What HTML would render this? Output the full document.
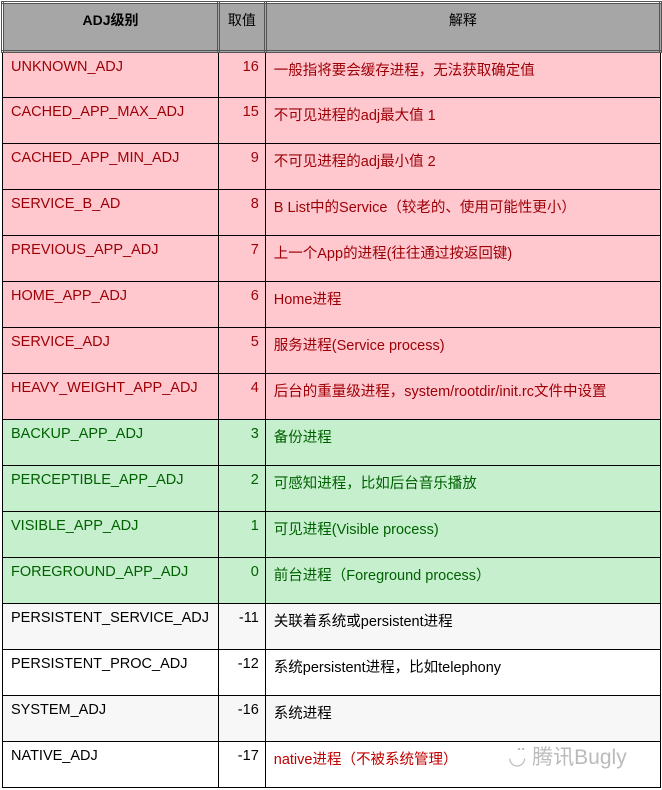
<!DOCTYPE html>
<html><head><meta charset="utf-8"><style>
body{margin:0;background:#fff;width:662px;height:790px;overflow:hidden;font-family:"Liberation Sans","Noto Sans CJK SC",sans-serif;font-size:14.5px}
table{position:absolute;left:1px;top:1px;border-collapse:collapse;table-layout:fixed}
td{border:1px solid #000;height:46px;vertical-align:top;padding:6px 8px 0 8px;box-sizing:border-box;white-space:nowrap;overflow:hidden}
th{background:#a6a6a6;border:3px double #555;height:49px;vertical-align:top;padding-top:6px;font-size:14px;box-sizing:border-box}
th.b{font-weight:bold}th.n{font-weight:normal}
td.v{text-align:right;padding-right:6px}
.p td{background:#ffc7ce;color:#9c0006}
.g td{background:#c6efce;color:#006100}
.w td{background:#fff;color:#000}
.s td{background:#f7f7f7;color:#000}
tr td.r{color:#c00000}
.wm{position:absolute;left:508px;top:741px;color:#bbb;font-size:21px}
</style></head><body>
<table>
<colgroup><col style="width:216px"><col style="width:47px"><col style="width:396px"></colgroup>
<tr><th class="b">ADJ级别</th><th class="n">取值</th><th class="n">解释</th></tr>
<tr class="p"><td>UNKNOWN_ADJ</td><td class="v">16</td><td>一般指将要会缓存进程，无法获取确定值</td></tr>
<tr class="p"><td>CACHED_APP_MAX_ADJ</td><td class="v">15</td><td>不可见进程的adj最大值 1</td></tr>
<tr class="p"><td>CACHED_APP_MIN_ADJ</td><td class="v">9</td><td>不可见进程的adj最小值 2</td></tr>
<tr class="p"><td>SERVICE_B_AD</td><td class="v">8</td><td>B List中的Service（较老的、使用可能性更小）</td></tr>
<tr class="p"><td>PREVIOUS_APP_ADJ</td><td class="v">7</td><td>上一个App的进程(往往通过按返回键)</td></tr>
<tr class="p"><td>HOME_APP_ADJ</td><td class="v">6</td><td>Home进程</td></tr>
<tr class="p"><td>SERVICE_ADJ</td><td class="v">5</td><td>服务进程(Service process)</td></tr>
<tr class="p"><td>HEAVY_WEIGHT_APP_ADJ</td><td class="v">4</td><td>后台的重量级进程，system/rootdir/init.rc文件中设置</td></tr>
<tr class="g"><td>BACKUP_APP_ADJ</td><td class="v">3</td><td>备份进程</td></tr>
<tr class="g"><td>PERCEPTIBLE_APP_ADJ</td><td class="v">2</td><td>可感知进程，比如后台音乐播放</td></tr>
<tr class="g"><td>VISIBLE_APP_ADJ</td><td class="v">1</td><td>可见进程(Visible process)</td></tr>
<tr class="g"><td>FOREGROUND_APP_ADJ</td><td class="v">0</td><td>前台进程（Foreground process）</td></tr>
<tr class="s"><td>PERSISTENT_SERVICE_ADJ</td><td class="v">-11</td><td>关联着系统或persistent进程</td></tr>
<tr class="w"><td>PERSISTENT_PROC_ADJ</td><td class="v">-12</td><td>系统persistent进程，比如telephony</td></tr>
<tr class="s"><td>SYSTEM_ADJ</td><td class="v">-16</td><td>系统进程</td></tr>
<tr class="w"><td>NATIVE_ADJ</td><td class="v">-17</td><td class="r">native进程（不被系统管理）</td></tr>
</table>
<div class="wm">◡̈ 腾讯Bugly</div>
</body></html>
